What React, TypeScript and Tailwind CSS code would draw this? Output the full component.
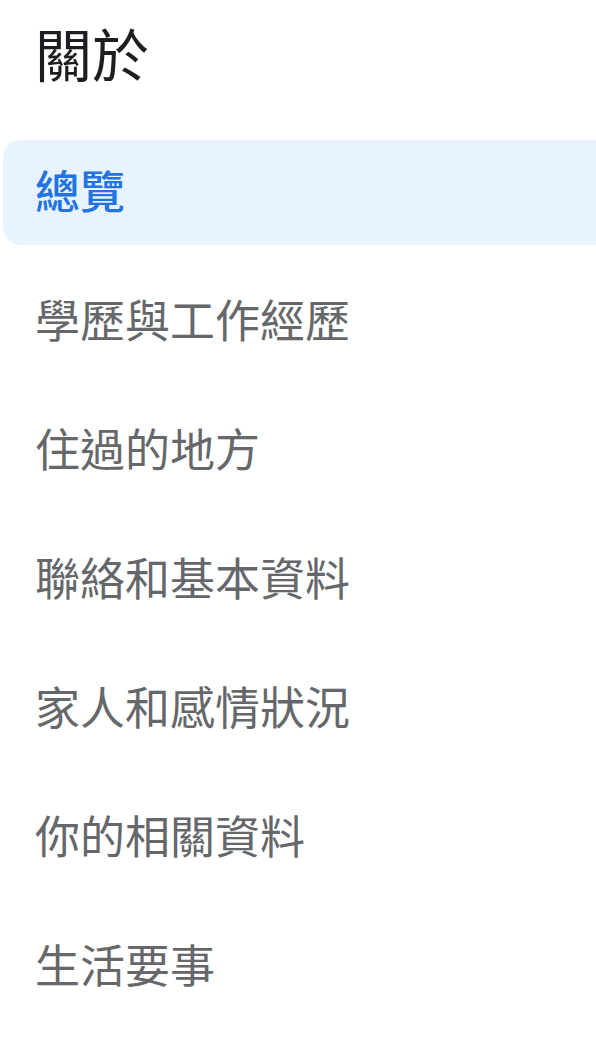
const items = [
  "總覽",
  "學歷與工作經歷",
  "住過的地方",
  "聯絡和基本資料",
  "家人和感情狀況",
  "你的相關資料",
  "生活要事",
];

export default function App() {
  const active = "總覽";

  return (
    <div
      className="h-[1060px] w-[596px] overflow-hidden bg-white"
      style={{ fontFamily: '"Noto Sans CJK TC", "Noto Sans", sans-serif' }}
    >
      <div className="flex h-[106px] items-center pl-[35px] text-[57px] font-normal text-[#1c1e21]">
        關於
      </div>
      <ul className="mt-[34px] flex flex-col gap-[24px] pl-[3px]">
        {items.map((item) => (
          <li
            key={item}
            className={`flex h-[105px] items-center rounded-l-[18px] pb-[5px] pl-[32px] text-[45px] ${
              item === active
                ? "bg-[#e7f3ff] font-medium text-[#2374e1]"
                : "font-normal text-[#65676b]"
            }`}
          >
            {item}
          </li>
        ))}
      </ul>
    </div>
  );
}
